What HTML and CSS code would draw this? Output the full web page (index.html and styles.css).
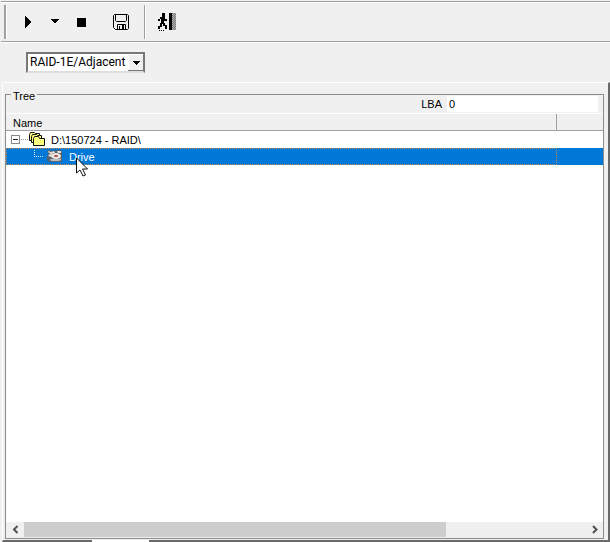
FILE: index.html
```html
<!DOCTYPE html>
<html lang="en">
<head>
<meta charset="utf-8">
<title>RAID</title>
<link rel="stylesheet" href="styles.css">
</head>
<body>
<header class="toolbar">
  <button class="tool" aria-label="Start"><svg width="24" height="24" shape-rendering="crispEdges"><path d="M8 6h1v1h1v1h1v1h1v1h1v1h1v2h-1v1h-1v1h-1v1h-1v1H9v1H8z"/></svg></button>
  <button class="tool arrow" aria-label="Start options"><svg width="16" height="24" shape-rendering="crispEdges"><path d="M4 9h8v1h-1v1h-1v1H9v1H7v-1H6v-1H5v-1H4z"/></svg></button>
  <button class="tool stop" aria-label="Stop"><svg width="24" height="24"><path d="M7 8h9v9H7z"/></svg></button>
  <button class="tool save" aria-label="Save"><svg width="24" height="24" fill="none" stroke="#000"><path d="M4.500 5.500l1-1h13l1 1v13l-1 1H6.500l-2-2zM6.500 4.500v6l1 1h9l1-1v-6M8.500 19v-4.500h8V19M10.500 16v3M13.500 15v4M14.500 15v4"/></svg></button>
  <span class="separator"></span>
  <button class="tool exit" aria-label="Exit"><svg width="24" height="24" shape-rendering="crispEdges"><path d="M8 3h3v4H8zM6 7h5v2h2v2h-3v2h1v2h2v4h-2v-3H9v-2H8v3H6v2H4v-3h2v-3h1V9H6v2H4V9h2zM5 20h1v1H5zM7 20h1v1H7zM9 20h1v1H9zM15 3h3v17h-3z"/><path fill="#b0b0b0" d="M18 3h4v17h-4z"/><path stroke="#777" stroke-dasharray="1 1" d="M18.500 3v17M20.500 3v17"/><path stroke="#777" stroke-dasharray="1 1" stroke-dashoffset="1" d="M19.500 3v17M21.500 3v17"/></svg></button>
</header>
<div class="options">
  <span class="combo">
    <select aria-label="RAID type"><option>RAID-1E/Adjacent</option></select>
    <svg class="combo-arrow" width="16" height="17" shape-rendering="crispEdges"><path fill="#f0f0f0" d="M0 0h16v17H0z"/><path fill="none" stroke="#fff" d="M.500 17V.500H16"/><path fill="none" stroke="#777" d="M0 16.500h15.500V0"/><path d="M5 7h7v1h-1v1h-1v1H9v1H8v-1H7V9H6V8H5z"/></svg>
  </span>
</div>
<main class="panel">
  <fieldset class="group">
    <legend>Tree</legend>
    <div class="lba"><label for="lba">LBA</label><input id="lba" value="0"></div>
    <div class="tree">
      <table>
        <colgroup><col><col class="narrow"></colgroup>
        <thead><tr><th>Name</th><th></th></tr></thead>
        <tbody>
          <tr><td><div class="node"><svg class="branch" width="23" height="17" shape-rendering="crispEdges"><path fill="#fff" stroke="#888" d="M5.500 4.500h8v8h-8z"/><path stroke="#222" d="M7 8.500h5"/><path stroke="#999" stroke-dasharray="1 1" d="M15 8.500h7"/></svg><svg width="16" height="17"><g fill="#ffff80" stroke="#111"><path d="M.500 9.500v-6l1-2h4l1 1h4v7z"/><path d="M2.500 11.500v-6l1-2h4l1 1h4v7z"/><path d="M4.500 14.500v-7l1-2h4l1 2h5v7z"/></g></svg><span>D:\150724 - RAID\</span></div></td><td></td></tr>
          <tr class="selected"><td><div class="node child"><svg class="branch" width="18" height="17" shape-rendering="crispEdges"><path fill="none" stroke="#d6e8f8" stroke-dasharray="1 1" d="M5.500 0v9M5 8.500h10"/></svg><svg width="16" height="17"><path fill="#59636b" d="M0 3l2-1 3 1 7-1 3 1v10l-1 1H2l-2-2V8l2-2z"/><path fill="#e9dfd9" d="M1 3l3 1 3-1 1 2-4 1-2-1zM10 3h4v2h-3zM1 7l3-1 2 1-3 2z"/><ellipse cx="9" cy="8" rx="5" ry="3" fill="#eee9e4"/><ellipse cx="9" cy="8" rx="2" ry="1" fill="#a34a35"/><path fill="#b9bec2" d="M3 11h9l2-1v2l-2 1H4z"/></svg><span>Drive</span></div></td><td></td></tr>
        </tbody>
      </table>
      <svg class="pointer" width="14" height="20"><path fill="#fff" stroke="#111" d="M1.500 1v15l3.500-3 3 6 2.500-1-3-6h5z"/></svg>
    </div>
    <div class="scrollbar">
      <button aria-label="Scroll left"><svg width="18" height="15"><path d="M11.500 4L8 7.500l3.500 3.500"/></svg></button>
      <div class="track"><div class="thumb"></div></div>
      <button aria-label="Scroll right"><svg width="17" height="15"><path d="M7 4l3.500 3.500L7 11"/></svg></button>
    </div>
  </fieldset>
</main>
<div class="tab-edge"></div>
</body>
</html>
```
FILE: styles.css
```css
* { box-sizing: border-box; }
body {
  margin: 0;
  height: 100vh;
  display: flex;
  flex-direction: column;
  background: #f0f0f0;
  color: #000;
  font: 11px/14px "Liberation Sans", Arial, sans-serif;
  overflow: hidden;
}
button { border: 0; padding: 0; background: none; }
svg { display: block; flex: none; }
.toolbar {
  display: flex;
  align-items: center;
  height: 41px;
  margin: 1px 0 0 1px;
  padding-left: 3px;
  border-top: 1px solid #a0a0a0;
  border-bottom: 1px solid #a0a0a0;
  box-shadow: inset 0 1px #fff, 0 1px #fff;
}
.toolbar::before, .separator {
  content: "";
  width: 2px;
  height: 34px;
  background: #a0a0a0;
  border-right: 1px solid #fff;
}
.tool { margin-left: 10px; }
.arrow { margin-left: 6px; }
.stop { margin-left: 7px; }
.save { margin-left: 15px; margin-right: 11px; }
.exit { margin-left: 8px; }
.options { padding: 10px 26px 8px; }
.combo {
  position: relative;
  display: block;
  width: 119px;
  height: 21px;
}
.combo select {
  appearance: none;
  width: 100%;
  height: 100%;
  padding: 0 16px 0 2px;
  border: 2px solid;
  border-color: #777 #777 #ddd #777;
  border-radius: 0;
  background: #fff;
  color: #000;
  font: 12px/17px Roboto, "Liberation Sans", sans-serif;
}
.combo-arrow {
  position: absolute;
  top: 2px;
  right: 1px;
  pointer-events: none;
}
.panel {
  flex: 1;
  min-height: 0;
  display: flex;
  margin: 1px 0 0 2px;
  padding: 11px 4px 1px 2px;
  border: 1px solid #fff;
  border-right: 2px solid #696969;
  border-bottom: 2px solid #696969;
}
.group {
  position: relative;
  flex: 1;
  min-width: 0;
  display: flex;
  flex-direction: column;
  margin: 0;
  padding: 0;
  border: 1px solid #8c8c8c;
}
legend {
  position: absolute;
  top: -6px;
  left: 5px;
  padding: 0 2px;
  background: #f0f0f0;
}
.lba {
  display: flex;
  justify-content: flex-end;
  align-items: center;
  height: 19px;
  padding-right: 5px;
  border-bottom: 1px solid #fff;
}
.lba label { margin-right: 5px; }
.lba input {
  width: 151px;
  height: 16px;
  border: 0;
  padding: 0 2px;
  background: #fff;
  color: #000;
  font: inherit;
}
.tree {
  position: relative;
  flex: 1;
  background: #fff;
}
table {
  width: 100%;
  table-layout: fixed;
  border-collapse: separate;
  border-spacing: 0;
}
.narrow { width: 46px; }
th {
  height: 17px;
  padding: 2px 7px 0;
  border-bottom: 1px solid #a0a0a0;
  background: #f0f0f0;
  font-weight: normal;
  text-align: left;
}
th:first-child { border-right: 1px solid #a0a0a0; }
td { height: 17px; padding: 0; }
.node {
  display: flex;
  align-items: center;
  height: 17px;
}
.node span { margin-left: 6px; }
.child { padding-left: 23px; }
.selected { background: #0078d7; color: #fff; }
.selected td:first-child { outline: 1px dotted #c08a58; outline-offset: -1px; }
.pointer {
  position: absolute;
  left: 69px;
  top: 43px;
}
.scrollbar {
  display: flex;
  height: 16px;
  padding-bottom: 1px;
  background: #f0f0f0;
}
.scrollbar path { fill: none; stroke: #505050; stroke-width: 2; }
.track { flex: 1; }
.thumb { width: 75%; height: 100%; background: #cdcdcd; }
.tab-edge {
  position: absolute;
  left: 92px;
  bottom: 0;
  width: 57px;
  height: 2px;
  background: #fff;
}
```
